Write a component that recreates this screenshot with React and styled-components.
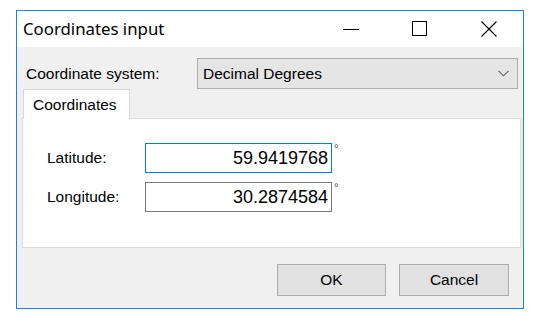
import React from "react";
import styled, { createGlobalStyle } from "styled-components";

const Global = createGlobalStyle`
  *, *::before, *::after { box-sizing: border-box; }
  html, body { margin: 0; padding: 0; background: #ffffff; }
  body { width: 542px; height: 316px; overflow: hidden; }
`;

const Page = styled.div`
  padding: 10px 0 0 16px;
`;

const Window = styled.div`
  width: 508px;
  height: 299px;
  border: 1px solid #1c84d8;
  background: #f0f0f0;
  display: flex;
  flex-direction: column;
  font-family: "Liberation Sans", Arial, sans-serif;
  font-size: 15.5px;
  color: #000;
`;

const TitleBar = styled.div`
  height: 36px;
  flex: none;
  background: #ffffff;
  display: flex;
  align-items: center;
`;

const Title = styled.div`
  flex: 1;
  padding-left: 6px;
  font-family: "Noto Sans", "Open Sans", sans-serif;
  font-size: 16.8px;
  color: #000;
  padding-bottom: 2px;
`;

const CaptionButton = styled.div`
  width: 69px;
  height: 36px;
  display: flex;
  align-items: center;
  justify-content: center;
`;

const Body = styled.div`
  flex: 1;
  display: flex;
  flex-direction: column;
  padding: 11px 0 0 0;
`;

const TopRow = styled.div`
  display: flex;
  align-items: center;
  padding: 0 5px 0 9px;
`;

const Label = styled.span`
  width: ${(p) => p.$w}px;
  flex: none;
  white-space: nowrap;
`;

const Combo = styled.div`
  flex: 1;
  height: 31px;
  border: 1px solid #adadad;
  background: #e5e5e5;
  display: flex;
  align-items: center;
  padding: 0 8px 0 5px;
  justify-content: space-between;
`;

const TabStrip = styled.div`
  display: flex;
  padding-left: 6px;
`;

const Tab = styled.div`
  width: 107px;
  height: 30px;
  background: #ffffff;
  border: 1px solid #d9d9d9;
  border-bottom: none;
  display: flex;
  align-items: center;
  padding-left: 9px;
  position: relative;
  z-index: 1;
  margin-bottom: -1px;
`;

const Panel = styled.div`
  margin: 0 2px 0 5px;
  height: 130px;
  background: #ffffff;
  border: 1px solid #dcdcdc;
  padding: 24px 0 0 24px;
  display: flex;
  flex-direction: column;
  gap: 9px;
`;

const FieldRow = styled.div`
  display: flex;
  align-items: flex-start;
`;

const FieldLabel = styled.span`
  width: 98px;
  flex: none;
  line-height: 30px;
`;

const Input = styled.div`
  width: 187px;
  height: 30px;
  border: 1px solid ${(p) => (p.$focused ? "#0078d7" : "#7a7a7a")};
  background: #fff;
  display: flex;
  align-items: center;
  justify-content: flex-end;
  padding: 0 3px 0 3px;
  font-size: 18px;
`;

const Degree = styled.span`
  font-size: 11px;
  line-height: 11px;
  margin: 0 0 0 2px;
  color: #444;
`;

const ButtonRow = styled.div`
  display: flex;
  justify-content: flex-end;
  gap: 13px;
  padding: 16px 14px 0 0;
`;

const Button = styled.div`
  width: ${(p) => p.$w}px;
  height: 32px;
  border: 1px solid #adadad;
  background: #e1e1e1;
  display: flex;
  align-items: center;
  justify-content: center;
`;

export default function App() {
  return (
    <>
      <Global />
      <Page>
        <Window>
          <TitleBar>
            <Title>Coordinates input</Title>
            <CaptionButton>
              <svg width="16" height="16" viewBox="0 0 16 16">
                <line x1="0" y1="8.5" x2="16" y2="8.5" stroke="#000" strokeWidth="1" />
              </svg>
            </CaptionButton>
            <CaptionButton>
              <svg width="16" height="16" viewBox="0 0 16 16">
                <rect x="0.5" y="0.5" width="14" height="14" fill="none" stroke="#000" strokeWidth="1" />
              </svg>
            </CaptionButton>
            <CaptionButton>
              <svg width="16" height="16" viewBox="0 0 16 16">
                <path d="M0.5 0.5 L15.5 15.5 M15.5 0.5 L0.5 15.5" stroke="#000" strokeWidth="1.1" fill="none" />
              </svg>
            </CaptionButton>
          </TitleBar>
          <Body>
            <TopRow>
              <Label $w={171}>Coordinate system:</Label>
              <Combo>
                <span>Decimal Degrees</span>
                <svg width="11" height="7" viewBox="0 0 11 7">
                  <path d="M0.5 0.8 L5.5 5.8 L10.5 0.8" stroke="#606060" strokeWidth="1.1" fill="none" />
                </svg>
              </Combo>
            </TopRow>
            <TabStrip>
              <Tab>Coordinates</Tab>
            </TabStrip>
            <Panel>
              <FieldRow>
                <FieldLabel>Latitude:</FieldLabel>
                <Input $focused>59.9419768</Input>
                <Degree>°</Degree>
              </FieldRow>
              <FieldRow>
                <FieldLabel>Longitude:</FieldLabel>
                <Input>30.2874584</Input>
                <Degree>°</Degree>
              </FieldRow>
            </Panel>
            <ButtonRow>
              <Button $w={109}>OK</Button>
              <Button $w={110}>Cancel</Button>
            </ButtonRow>
          </Body>
        </Window>
      </Page>
    </>
  );
}
